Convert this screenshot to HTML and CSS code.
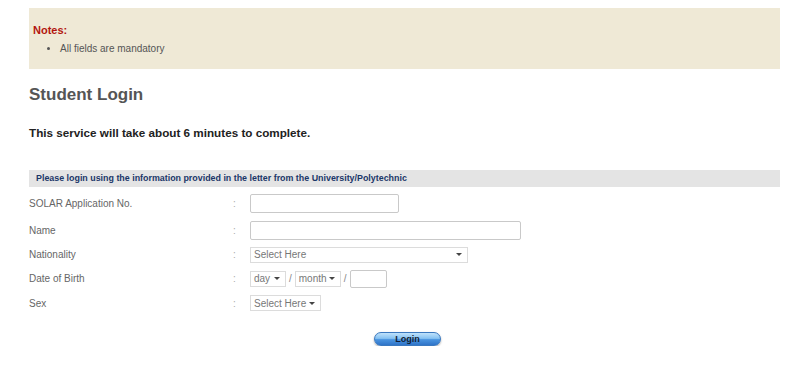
FILE: index.html
```html
<!DOCTYPE html>
<html>
<head>
<meta charset="utf-8">
<title>Student Login</title>
<link rel="stylesheet" href="styles.css">
</head>
<body>
<div class="page">
  <div class="notes">
    <div class="notes-title">Notes:</div>
    <ul class="notes-list">
      <li>All fields are mandatory</li>
    </ul>
  </div>

  <h1 class="title">Student Login</h1>
  <p class="lead">This service will take about 6 minutes to complete.</p>

  <div class="bar">Please login using the information provided in the letter from the University/Polytechnic</div>

  <div class="form">
    <div class="row r1">
      <div class="label">SOLAR Application No.</div>
      <div class="colon">:</div>
      <div class="field"><input class="text w-solar" type="text"></div>
    </div>
    <div class="row r2">
      <div class="label">Name</div>
      <div class="colon">:</div>
      <div class="field"><input class="text w-name" type="text"></div>
    </div>
    <div class="row r3">
      <div class="label">Nationality</div>
      <div class="colon">:</div>
      <div class="field"><div class="select w-nat"><span>Select Here</span><i class="arrow"></i></div></div>
    </div>
    <div class="row r4">
      <div class="label">Date of Birth</div>
      <div class="colon">:</div>
      <div class="field dob">
        <div class="select w-day"><span>day</span><i class="arrow"></i></div>
        <span class="slash">/</span>
        <div class="select w-month"><span>month</span><i class="arrow"></i></div>
        <span class="slash">/</span>
        <input class="text w-year" type="text">
      </div>
    </div>
    <div class="row r5">
      <div class="label">Sex</div>
      <div class="colon">:</div>
      <div class="field"><div class="select w-sex"><span>Select Here</span><i class="arrow"></i></div></div>
    </div>
  </div>

  <div class="actions">
    <button class="login">Login</button>
  </div>
</div>
</body>
</html>
```

FILE: styles.css
```css
html, body {
  margin: 0;
  padding: 0;
  background: #ffffff;
}
body {
  font-family: "Liberation Sans", Arial, sans-serif;
  color: #555;
}
.page {
  width: 751px;
  margin-left: 29px;
  padding-top: 8px;
}
.notes {
  background: #efe9d6;
  height: 61px;
  box-sizing: border-box;
  padding: 16px 0 0 4px;
}
.notes-title {
  color: #b3160f;
  font-weight: bold;
  font-size: 11px;
  line-height: 13px;
}
.notes-list {
  margin: 6px 0 0 0;
  padding-left: 27px;
  font-size: 10px;
  line-height: 12px;
  color: #555;
}
.title {
  margin: 16px 0 0 0;
  font-size: 17px;
  line-height: 20px;
  color: #555;
  font-weight: bold;
}
.lead {
  margin: 21px 0 0 0;
  font-size: 11.7px;
  line-height: 14px;
  color: #222;
  font-weight: bold;
}
.bar {
  margin-top: 30px;
  background: #e4e4e4;
  height: 17px;
  line-height: 17px;
  padding-left: 7px;
  font-size: 8.9px;
  font-weight: bold;
  color: #1b3769;
}
.form {
  padding-top: 6px;
}
.row {
  display: grid;
  grid-template-columns: 204px 17px 1fr;
  align-items: center;
  font-size: 10px;
  color: #666;
}
.r1 { height: 20px; margin-bottom: 7px; }
.r2 { height: 20px; margin-bottom: 6px; }
.r3 { height: 17px; margin-bottom: 6px; }
.r4 { height: 19px; margin-bottom: 6px; }
.r5 { height: 18px; }
.colon {
  color: #aaa;
}
.field {
  display: flex;
  align-items: center;
}
.text {
  box-sizing: border-box;
  height: 19px;
  border: 1px solid #c9c9c9;
  border-radius: 2px;
  background: #fff;
  margin: 0;
  padding: 0 3px;
  font: inherit;
}
.w-solar { width: 149px; }
.w-name { width: 271px; }
.w-year { width: 37px; height: 18px; }
.select {
  box-sizing: border-box;
  height: 16px;
  border: 1px solid #dcdcdc;
  background: #fff;
  display: flex;
  align-items: center;
  justify-content: space-between;
  padding: 0 5px 0 3px;
  font-size: 10px;
  color: #777;
}
.w-nat { width: 218px; }
.w-day { width: 36px; }
.w-month { width: 46px; }
.w-sex { width: 71px; }
.arrow {
  width: 0;
  height: 0;
  border-left: 3px solid transparent;
  border-right: 3px solid transparent;
  border-top: 3px solid #444;
}
.slash {
  color: #888;
  padding: 0 3px;
  font-size: 10px;
}
.actions {
  display: flex;
  justify-content: center;
  padding-top: 20px;
  padding-left: 6px;
}
.login {
  width: 67px;
  height: 14px;
  border: 1px solid #3a78bf;
  border-radius: 8px;
  background: linear-gradient(to bottom, #bfe2fb 0%, #86c2f2 45%, #4a94e0 55%, #2f74c8 100%);
  box-shadow: 0 1px 2px rgba(0,0,0,0.35);
  font-family: "Liberation Sans", Arial, sans-serif;
  font-size: 9px;
  font-weight: bold;
  color: #111d33;
  padding: 0;
  line-height: 12px;
}
```
